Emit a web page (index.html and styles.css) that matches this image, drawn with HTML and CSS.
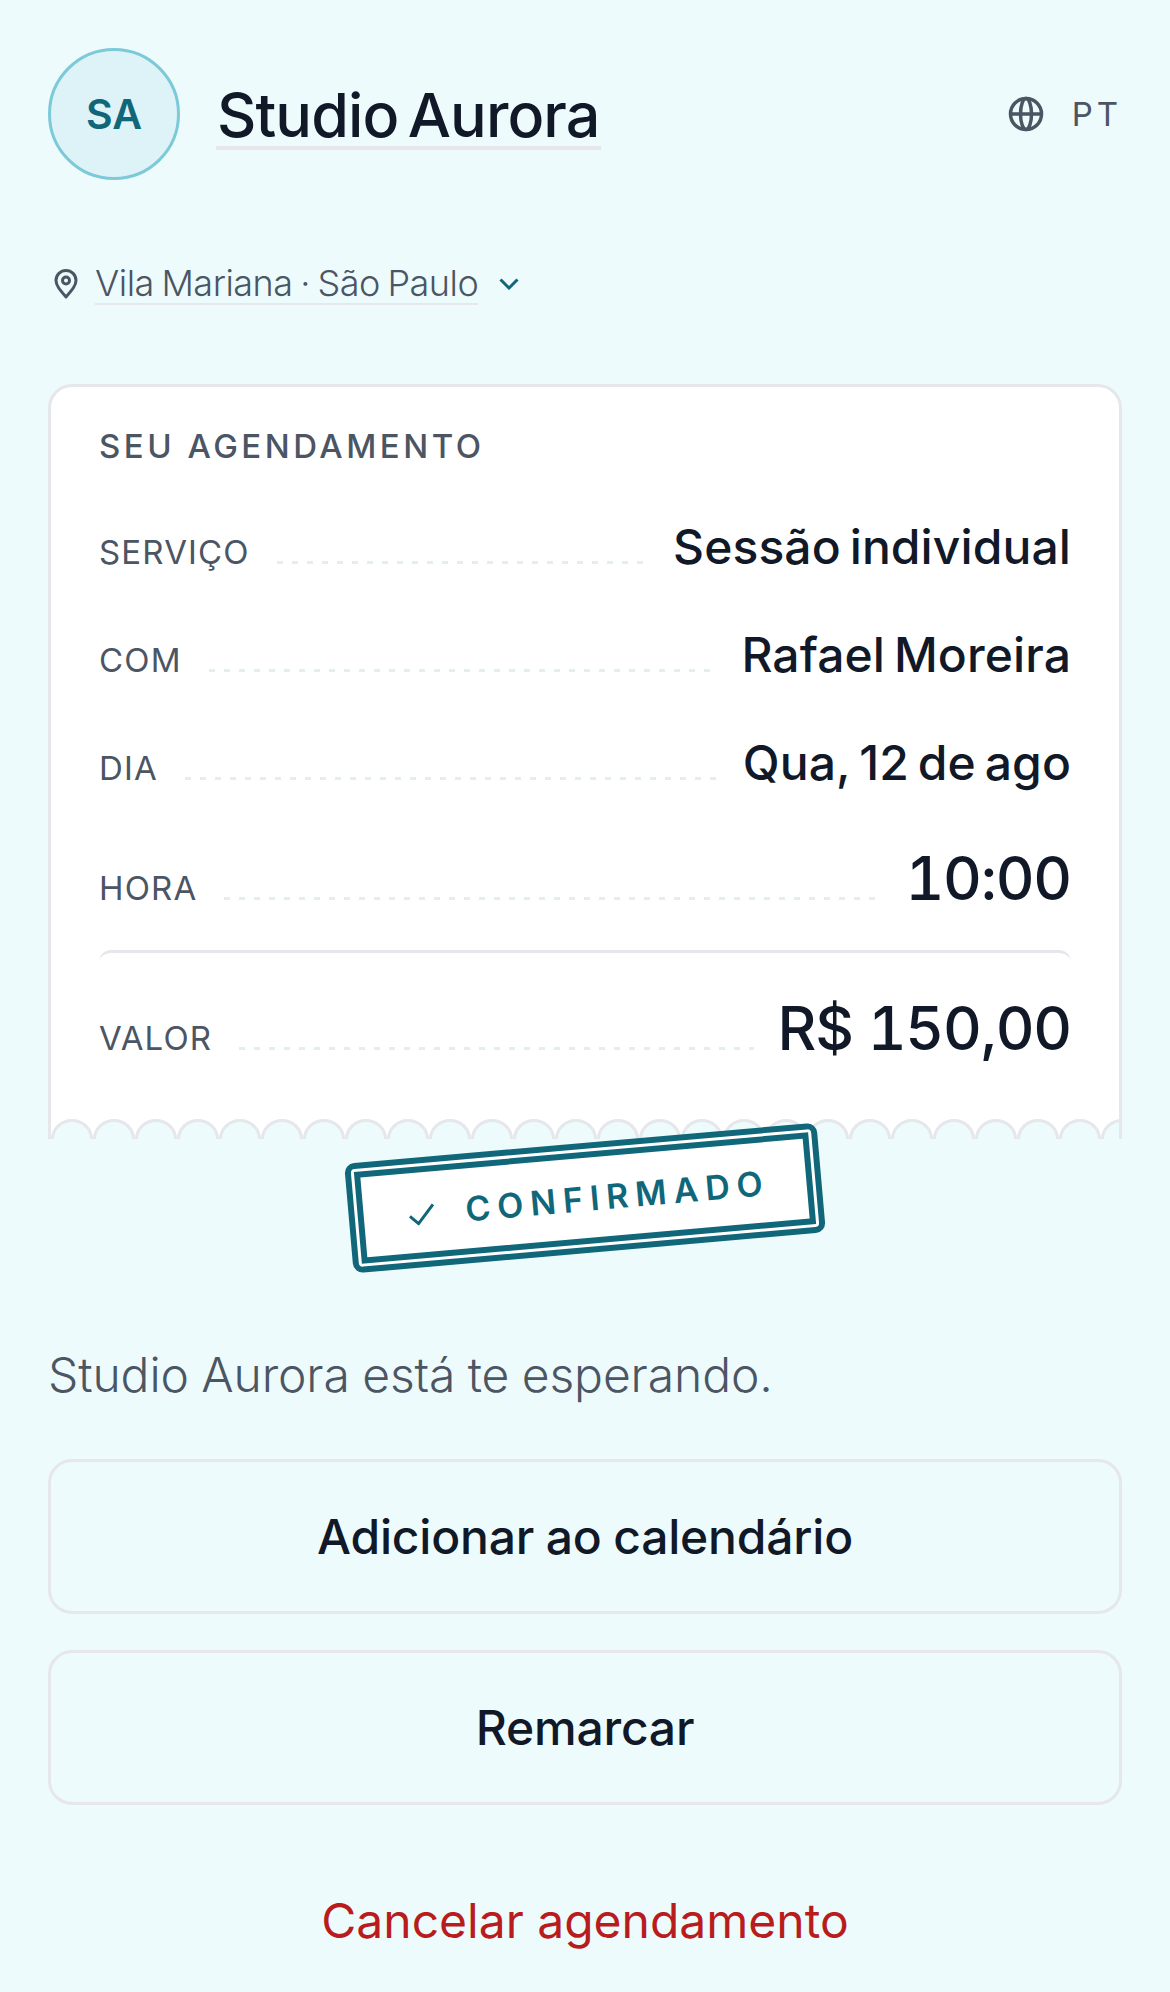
FILE: index.html
```html
<!DOCTYPE html>
<html lang="pt-BR">

<head>
  <meta charset="UTF-8">
  <title>Studio Aurora</title>
  <link rel="stylesheet" href="styles.css">
</head>

<body>
  <div class="page">
    <header class="header">
      <div class="avatar">SA</div>
      <h1 class="title">Studio Aurora</h1>
      <div class="lang">
        <svg class="globe" viewBox="0 0 36 36" fill="none" stroke="currentColor" stroke-width="3.500">
          <circle cx="18" cy="18" r="15.500"></circle>
          <path d="M3 18h30"></path>
          <ellipse cx="18" cy="18" rx="5.500" ry="15.500"></ellipse>
        </svg>
        <span>PT</span>
      </div>
    </header>

    <div class="location">
      <svg class="pin" viewBox="0 0 24 30" fill="none" stroke="currentColor" stroke-width="3">
        <path d="M12 28C6 21 2 16.500 2 11.500a10 10 0 0 1 20 0C22 16.500 18 21 12 28z" stroke-linejoin="round"></path>
        <circle cx="12" cy="11.500" r="3.500"></circle>
      </svg>
      <span class="location-name">Vila Mariana · São Paulo</span>
      <svg class="chevron" viewBox="0 0 20 12" fill="none" stroke="currentColor" stroke-width="3">
        <path d="M1.500 1.500 10 10l8.500-8.500"></path>
      </svg>
    </div>

    <section class="card">
      <div class="card-body">
        <h2 class="card-title">SEU AGENDAMENTO</h2>
        <div class="row">
          <span class="label">SERVIÇO</span>
          <span class="leader"></span>
          <span class="value">Sessão individual</span>
        </div>
        <div class="row">
          <span class="label">COM</span>
          <span class="leader"></span>
          <span class="value">Rafael Moreira</span>
        </div>
        <div class="row row-last">
          <span class="label">DIA</span>
          <span class="leader"></span>
          <span class="value">Qua, 12 de ago</span>
        </div>
        <div class="row row-big">
          <span class="label">HORA</span>
          <span class="leader"></span>
          <span class="value">10:00</span>
        </div>
        <div class="divider"></div>
        <div class="row row-big">
          <span class="label">VALOR</span>
          <span class="leader"></span>
          <span class="value">R$ 150,00</span>
        </div>
      </div>
      <svg class="scallops" height="20" aria-hidden="true">
        <defs>
          <pattern id="scallop" width="42" height="20" patternUnits="userSpaceOnUse">
            <path d="M0 20V18H1.500A19.500 17 0 0 1 40.500 18H42V20z" fill="#edfbfc"></path>
            <path d="M1.500 20A19.500 18.500 0 0 1 40.500 20" fill="none" stroke="#e5e7eb" stroke-width="3"></path>
          </pattern>
        </defs>
        <rect width="100%" height="20" fill="url(#scallop)"></rect>
      </svg>
    </section>

    <div class="stamp-wrap">
      <div class="stamp">
        <div class="stamp-inner">
          <svg class="check" viewBox="0 0 26 22" fill="none" stroke="currentColor" stroke-width="3">
            <path d="M1 12l8 8L25 2"></path>
          </svg>
          <span>CONFIRMADO</span>
        </div>
      </div>
    </div>

    <p class="message">Studio Aurora está te esperando.</p>

    <div class="actions">
      <button class="btn">Adicionar ao calendário</button>
      <button class="btn">Remarcar</button>
    </div>
    <button class="cancel">Cancelar agendamento</button>
  </div>
</body>

</html>
```

FILE: styles.css
```css
* {
  box-sizing: border-box;
}

body {
  margin: 0;
  background: #edfbfc;
  color: #111827;
  font-family: 'Inter', 'Liberation Sans', sans-serif;
}

.page {
  height: 1992px;
  padding: 48px 48px 0 48px;
  overflow: hidden;
}

.header {
  display: flex;
  align-items: center;
}

.avatar {
  display: flex;
  align-items: center;
  justify-content: center;
  flex: none;
  width: 132px;
  height: 132px;
  border: 3px solid #7ccad8;
  border-radius: 50%;
  background: #def3f7;
  color: #11677a;
  font-size: 41px;
  font-weight: 600;
}

.title {
  margin: 0 0 0 36px;
  border-bottom: 4px solid #e5e7eb;
  padding: 6px 1px 0 1px;
  font-size: 61px;
  font-weight: 500;
  line-height: 62px;
  letter-spacing: -0.900px;
  word-spacing: -6px;
}

.lang {
  display: flex;
  align-items: center;
  gap: 28px;
  margin-left: auto;
  color: #4b5563;
  font-size: 33px;
  letter-spacing: 0.120em;
}

.globe {
  width: 36px;
  height: 36px;
}

.location {
  display: flex;
  align-items: center;
  margin-top: 82px;
  margin-left: 6px;
  color: #4b5563;
}

.pin {
  width: 24px;
  height: 30px;
}

.location-name {
  margin-left: 17px;
  margin-top: 1px;
  border-bottom: 2px solid #e5e7eb;
  font-size: 36px;
  font-weight: 300;
  line-height: 40px;
  letter-spacing: -0.500px;
  word-spacing: -2px;
}

.chevron {
  width: 20px;
  height: 12px;
  margin-left: 21px;
  color: #11677a;
}

.card {
  margin-top: 79px;
  border: 3px solid #e5e7eb;
  border-bottom: none;
  border-radius: 24px 24px 0 0;
  background: #fff;
}

.card-body {
  height: 732px;
  padding: 35px 48px 0 48px;
}

.card-title {
  margin: 0 0 41px 0;
  color: #4b5563;
  font-size: 33px;
  font-weight: 500;
  line-height: 48px;
  letter-spacing: 3.500px;
}

.row {
  display: flex;
  align-items: baseline;
  margin-bottom: 36px;
}

.label {
  color: #4b5563;
  font-size: 33px;
  line-height: 40px;
  letter-spacing: 0.035em;
}

.leader {
  flex: 1;
  height: 3px;
  margin: 0 24px 0 27px;
  background: repeating-linear-gradient(90deg, #e2efef 0, #e2efef 6px, transparent 6px, transparent 15px);
}

.value {
  font-size: 48px;
  font-weight: 500;
  line-height: 72px;
  letter-spacing: 0.100px;
  word-spacing: -4px;
}

.row-last {
  margin-bottom: 34px;
}

.row-big {
  margin-bottom: 0;
}

.row-big .value {
  font-size: 60px;
  line-height: 90px;
  letter-spacing: -1.200px;
  word-spacing: 0;
  font-variant-numeric: tabular-nums;
}

.divider {
  height: 24px;
  margin: 27px 0 9px 0;
  border-top: 3px solid #e5e7eb;
  border-radius: 24px;
}

.scallops {
  display: block;
  width: 100%;
  height: 20px;
}

.stamp-wrap {
  display: flex;
  justify-content: center;
  margin-top: 4px;
}

.stamp {
  width: 474px;
  height: 110px;
  padding: 3px;
  border: 6px solid #11677a;
  border-radius: 10px;
  background: #fff;
  color: #11677a;
  transform: rotate(-5deg);
}

.stamp-inner {
  display: flex;
  align-items: center;
  justify-content: center;
  gap: 31px;
  height: 100%;
  padding-left: 8px;
  border: 6px solid #11677a;
}

.check {
  width: 26px;
  height: 22px;
  margin-top: 4px;
}

.stamp-inner span {
  font-size: 34px;
  font-weight: 600;
  letter-spacing: 7px;
}

.message {
  margin: 88px 0 0 0;
  color: #4b5563;
  font-size: 48px;
  font-weight: 300;
  line-height: 68px;
  letter-spacing: -0.100px;
  word-spacing: -1px;
}

.actions {
  display: flex;
  flex-direction: column;
  gap: 36px;
  margin-top: 50px;
}

.btn {
  height: 155px;
  border: 3px solid #e5e7eb;
  border-radius: 24px;
  background: transparent;
  color: #111827;
  font-family: inherit;
  font-size: 48px;
  font-weight: 500;
  letter-spacing: -0.200px;
  word-spacing: -1px;
}

.cancel {
  display: block;
  width: 100%;
  margin-top: 82px;
  border: none;
  padding: 0;
  background: none;
  color: #b91c1c;
  font-family: inherit;
  font-size: 48px;
  line-height: 68px;
}
```
